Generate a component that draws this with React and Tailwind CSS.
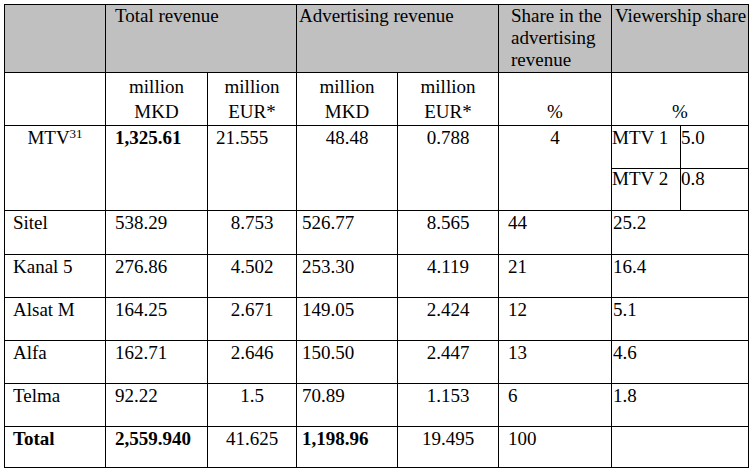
import React from 'react'

const rows = [
  ['Sitel', '538.29', '8.753', '526.77', '8.565', '44', '25.2'],
  ['Kanal 5', '276.86', '4.502', '253.30', '4.119', '21', '16.4'],
  ['Alsat M', '164.25', '2.671', '149.05', '2.424', '12', '5.1'],
  ['Alfa', '162.71', '2.646', '150.50', '2.447', '13', '4.6'],
  ['Telma', '92.22', '1.5', '70.89', '1.153', '6', '1.8'],
]

const App = () => {
  return (
    <div className="w-[754px] h-[472px] bg-white pt-[4px] pl-[4px] font-['Liberation_Serif',serif] text-[19px] leading-[18px] text-black">
      <div className="grid w-fit gap-px bg-black p-px grid-cols-[100px_101px_88px_100px_100px_112px_68px_67px] grid-rows-[67px_52px_42px_41px_43px_42px_42px_42px_42px_40px]">
        {/* header */}
        <div className="bg-[#c0c0c0]"></div>
        <div className="col-span-2 bg-[#c0c0c0] pl-[9px] pt-[2px]">Total revenue</div>
        <div className="col-span-2 bg-[#c0c0c0] pl-[2px] pt-[2px]">Advertising revenue</div>
        <div className="bg-[#c0c0c0] pl-[12px] leading-[22px]">Share in the advertising revenue</div>
        <div className="col-span-2 bg-[#c0c0c0] pl-[3px] pt-[2px]">Viewership share</div>

        {/* units */}
        <div className="bg-white"></div>
        <div className="bg-white text-center leading-[25px] pt-px">million<br />MKD</div>
        <div className="bg-white text-center leading-[25px] pt-px">million<br />EUR*</div>
        <div className="bg-white text-center leading-[25px] pt-px">million<br />MKD</div>
        <div className="bg-white text-center leading-[25px] pt-px">million<br />EUR*</div>
        <div className="bg-white text-center leading-[25px] pt-[26px]">%</div>
        <div className="col-span-2 bg-white text-center leading-[25px] pt-[26px]">%</div>

        {/* MTV */}
        <div className="row-span-2 bg-white text-center pt-[3px]">MTV<sup className="text-[13px]">31</sup></div>
        <div className="row-span-2 bg-white pl-[9px] pt-[3px] font-bold">1,325.61</div>
        <div className="row-span-2 bg-white pl-[8px] pt-[3px]">21.555</div>
        <div className="row-span-2 bg-white text-center pt-[3px]">48.48</div>
        <div className="row-span-2 bg-white text-center pt-[3px]">0.788</div>
        <div className="row-span-2 bg-white text-center pt-[3px]">4</div>
        <div className="bg-white pt-[3px]">MTV 1</div>
        <div className="bg-white pt-[3px]">5.0</div>
        <div className="bg-white pt-px">MTV 2</div>
        <div className="bg-white pt-px">0.8</div>

        {rows.map((r) => (
          <React.Fragment key={r[0]}>
            <div className="bg-white pl-[8px] pt-[3px]">{r[0]}</div>
            <div className="bg-white pl-[9px] pt-[3px]">{r[1]}</div>
            <div className="bg-white text-center pt-[3px]">{r[2]}</div>
            <div className="bg-white pl-[5px] pt-[3px]">{r[3]}</div>
            <div className="bg-white text-center pt-[3px]">{r[4]}</div>
            <div className="bg-white pl-[9px] pt-[3px]">{r[5]}</div>
            <div className="col-span-2 bg-white pl-px pt-[3px]">{r[6]}</div>
          </React.Fragment>
        ))}

        {/* total */}
        <div className="bg-white pl-[8px] pt-[3px] font-bold">Total</div>
        <div className="bg-white pl-[9px] pt-[3px] font-bold">2,559.940</div>
        <div className="bg-white text-center pt-[3px]">41.625</div>
        <div className="bg-white pl-[5px] pt-[3px] font-bold">1,198.96</div>
        <div className="bg-white text-center pt-[3px]">19.495</div>
        <div className="bg-white pl-[9px] pt-[3px]">100</div>
        <div className="col-span-2 bg-white"></div>
      </div>
    </div>
  )
}

export default App
